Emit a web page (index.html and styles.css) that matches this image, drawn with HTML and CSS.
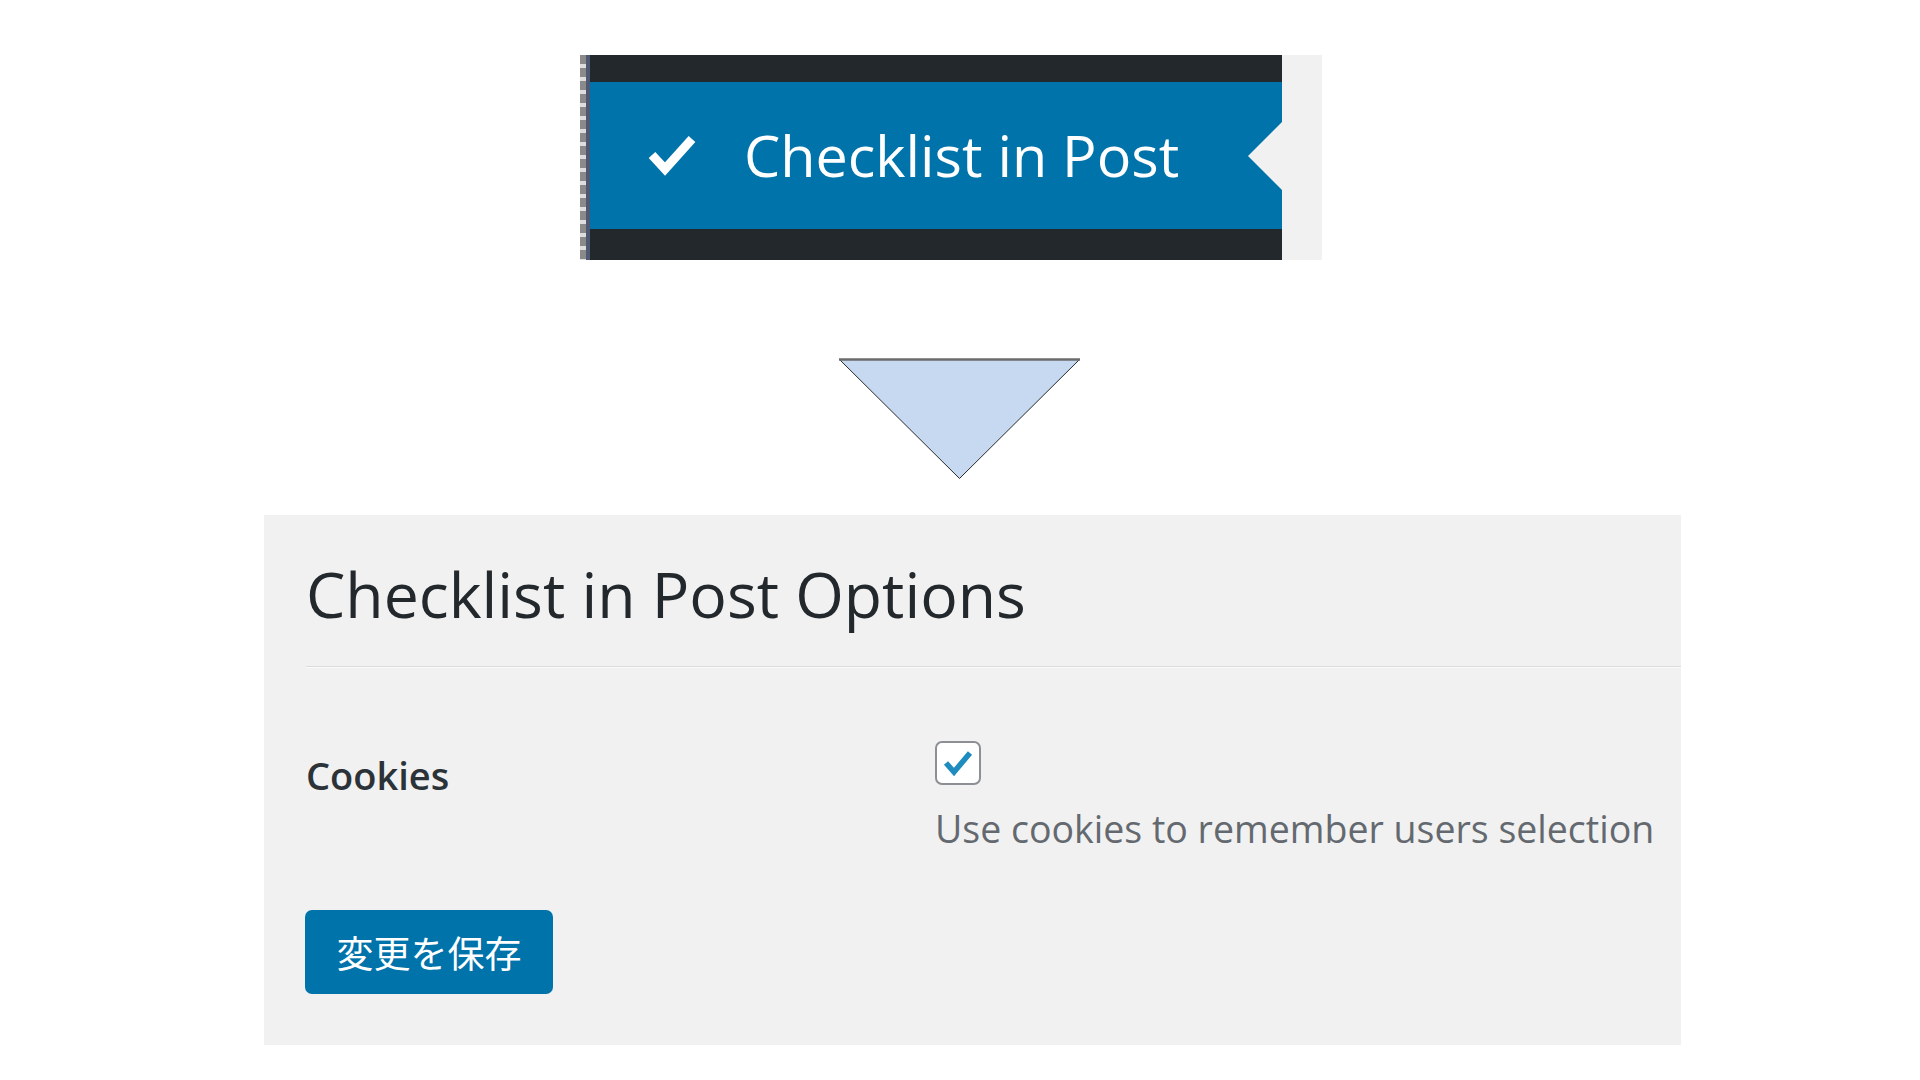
FILE: index.html
```html
<!DOCTYPE html>
<html lang="ja">
<head>
<meta charset="utf-8">
<title>Checklist in Post Options</title>
<link rel="stylesheet" href="styles.css">
</head>
<body>
  <div class="menu-shot">
    <div class="menu-edge"></div>
    <div class="menu">
      <div class="menu-dark menu-dark-top"></div>
      <div class="menu-item">
        <svg class="menu-check" width="50" height="42" viewBox="0 0 50 42" aria-hidden="true">
          <polyline points="5,21 18,35 45,5" fill="none" stroke="#fff" stroke-width="9" stroke-linejoin="miter" stroke-linecap="butt"/>
        </svg>
        <span class="menu-label">Checklist in Post</span>
        <span class="menu-notch"></span>
      </div>
      <div class="menu-dark menu-dark-bottom"></div>
    </div>
    <div class="menu-gutter"></div>
  </div>

  <svg class="arrow" width="243" height="122" viewBox="0 0 243 122" aria-hidden="true">
    <polygon points="1.5,1.5 241.5,1.5 121.5,120.5" fill="#c6d9f1" stroke="#2b2b2b" stroke-width="1"/>
    <line x1="1" y1="1.5" x2="242" y2="1.5" stroke="#6b6b6b" stroke-width="2.5"/>
  </svg>

  <section class="panel">
    <h1 class="panel-title">Checklist in Post Options</h1>
    <hr class="panel-rule">
    <div class="option-row">
      <div class="option-label">Cookies</div>
      <div class="option-field">
        <span class="checkbox">
          <svg width="30" height="26" viewBox="0 0 30 26" aria-hidden="true">
            <path d="M3 13 L11 22 L27 3" fill="none" stroke="#1e8cbe" stroke-width="5.5" stroke-linejoin="miter"/>
          </svg>
        </span>
        <p class="option-desc">Use cookies to remember users selection</p>
      </div>
    </div>
    <button class="save-btn" type="button">変更を保存</button>
  </section>
</body>
</html>
```
FILE: styles.css
```css
html, body {
  margin: 0;
  padding: 0;
  background: #ffffff;
}
body {
  width: 1920px;
  height: 1080px;
  overflow: hidden;
  font-family: "Open Sans", "Noto Sans", "Noto Sans CJK JP", sans-serif;
}

/* ---------- top menu screenshot ---------- */
.menu-shot {
  display: flex;
  margin: 55px 0 0 580px;
  width: 742px;
  height: 205px;
}
.menu-edge {
  width: 6px;
  background: repeating-linear-gradient(to bottom, #8a8a8a 0, #8a8a8a 9px, #dedede 9px, #dedede 13px);
  border-right: 4px solid #4f5873;
}
.menu {
  width: 692px;
  display: flex;
  flex-direction: column;
  box-shadow: 1px 0 0 #555;
}
.menu-dark {
  background: #23282d;
}
.menu-dark-top { height: 27px; }
.menu-dark-bottom { height: 31px; }
.menu-item {
  position: relative;
  height: 147px;
  background: #0073aa;
  display: flex;
  align-items: center;
  padding-left: 57px;
}
.menu-check {
  display: block;
  flex: none;
  margin-top: -2px;
}
.menu-label {
  margin-left: 47px;
  color: #ffffff;
  font-size: 57.5px;
  line-height: 1;
}
.menu-notch {
  position: absolute;
  right: 0;
  top: 40px;
  width: 0;
  height: 0;
  border-top: 34px solid transparent;
  border-bottom: 34px solid transparent;
  border-right: 34px solid #f1f1f1;
}
.menu-gutter {
  width: 40px;
  background: #f1f1f1;
}

/* ---------- arrow ---------- */
.arrow {
  display: block;
  margin: 98px 0 0 838px;
}

/* ---------- options panel ---------- */
.panel {
  margin: 35px 0 0 264px;
  width: 1417px;
  height: 530px;
  box-sizing: border-box;
  background: #f1f1f1;
  padding: 48px 0 0 42px;
}
.panel-title {
  margin: 0;
  font-weight: 400;
  font-size: 62.5px;
  line-height: 1;
  color: #23282d;
}
.panel-rule {
  margin: 40px 0 0 0;
  border: 0;
  border-top: 1px solid #dcdcdc;
  border-bottom: 1px solid #fafafa;
  height: 0;
}
.option-row {
  display: grid;
  grid-template-columns: 629px 1fr;
  margin-top: 73px;
}
.option-label {
  padding-top: 15px;
  font-size: 38px;
  font-weight: 600;
  line-height: 1;
  color: #2c3338;
}
.option-field {
  display: flex;
  flex-direction: column;
  align-items: flex-start;
}
.checkbox {
  box-sizing: border-box;
  width: 46px;
  height: 44px;
  border: 2px solid #8c8f94;
  border-radius: 7px;
  background: #ffffff;
  display: flex;
  align-items: center;
  justify-content: center;
}
.checkbox svg {
  display: block;
}
.option-desc {
  margin: 25px 0 0 0;
  font-size: 37.5px;
  line-height: 1;
  color: #646970;
}
.save-btn {
  display: flex;
  align-items: center;
  justify-content: center;
  margin-top: 63px;
  margin-left: -1px;
  width: 248px;
  height: 84px;
  padding: 0;
  border: 0;
  border-radius: 7px;
  background: #0073aa;
  color: #ffffff;
  font-family: "Noto Sans CJK JP", "Noto Sans", sans-serif;
  font-size: 37px;
  line-height: 1;
}
```
